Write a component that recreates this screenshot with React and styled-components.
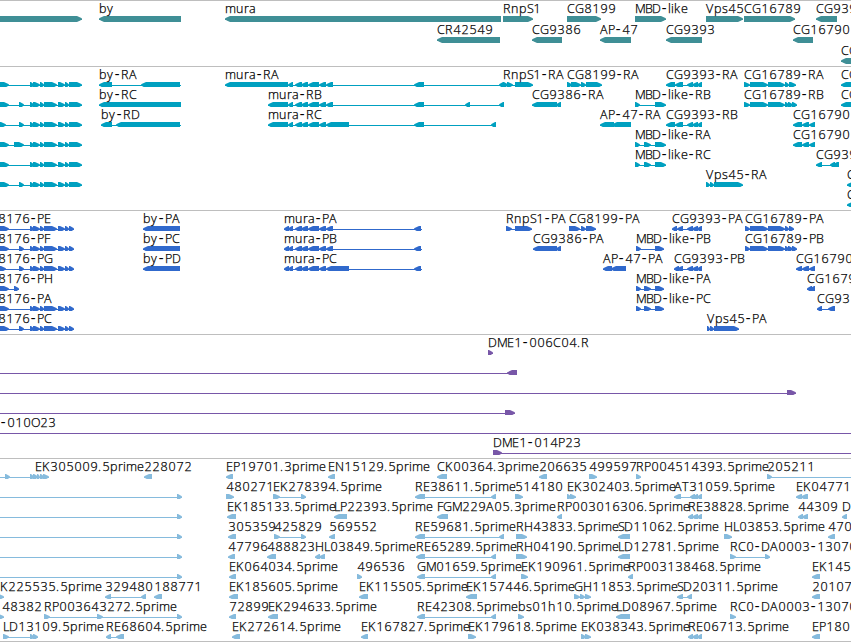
import React from 'react';
import styled, { createGlobalStyle } from 'styled-components';

const palette = {
  gene: '#3f8f96',
  rna: '#00a0c0',
  protein: '#3069cc',
  bac: '#7857a8',
  est: '#86bbdd',
  rule: '#bebebe',
};

const GlobalStyle = createGlobalStyle`
  body {
    background: #fff;
    margin: 0;
    overflow: hidden;
  }
`;

const Browser = styled.main`
  border-bottom: 1px solid ${palette.rule};
  box-sizing: border-box;
  display: flex;
  flex-direction: column;
  height: 642px;
  overflow: hidden;
  width: 851px;
`;

const Track = styled.section`
  border-top: 1px solid ${palette.rule};
  color: ${props => palette[props.$kind]};
  display: flex;
  flex-direction: column;
  padding-bottom: ${props => props.$pad}px;
`;

const LaneCanvas = styled.svg`
  display: block;
  flex: none;
  height: ${props => props.$height}px;
  overflow: hidden;
  width: 851px;
`;

const Label = styled.text`
  fill: #000;
  font-family: 'Open Sans', 'Noto Sans', sans-serif;
  font-size: 12.5px;
  font-weight: 300;
  stroke: #000;
  stroke-width: 0.25px;
`;

const Dash = styled.tspan`
  font-family: 'DejaVu Sans Mono', monospace;
  font-size: 14.5px;
  stroke: none;
`;

const Shape = styled.path`
  fill: currentColor;
`;

// Advance width of each label character, in whole pixels
const advances = {
  A: 8, B: 7, C: 8, D: 9, E: 7, F: 6, G: 9, H: 9, K: 8, L: 6, M: 10, N: 9,
  O: 9, P: 7, R: 8, S: 6, T: 7, V: 8, a: 7, b: 8, e: 7, h: 8, i: 3, k: 7,
  l: 3, m: 11, n: 8, p: 8, r: 5, s: 6, u: 8, y: 7, '-': 7, '.': 4,
};

// Nudges a glyph inside its advance width
const nudge = char => {
  if (char === '-') return -1.2;
  return char >= '0' && char <= '9' ? 0.4 : 0;
};

// Splits a label at its dashes and gives every character its own x
const labelRuns = (text, start) => {
  let x = start;
  return text.split(/(-)/).filter(Boolean).map(run => ({
    run,
    xs: run
      .split('')
      .map(char => {
        const at = x + nudge(char);
        x += advances[char] || 8;
        return at;
      })
      .join(' '),
  }));
};

// Feature: [label, direction, blocks, label x, line end]
const f = (label, dir, blocks, labelX, lineEnd) => ({
  label,
  dir,
  blocks,
  labelX: labelX === undefined ? blocks[0][0] : labelX,
  lineEnd: lineEnd || blocks[blocks.length - 1][1],
});

const R = 'right';
const L = 'left';

// A bar with a slightly rounded arrow head at the end it points to
const blockPath = ([start, end], dir) => {
  const head = Math.min(5, end - start - 1);
  const [back, tip, sign] = dir === R ? [start, end, -1] : [end, start, 1];
  const neck = tip + sign * head;
  const mid = tip + sign * head * 0.45;
  return `M${back} 15H${neck}L${mid} 16.2L${tip} 17.4V18.6L${mid} 19.8L${neck} 21H${back}Z`;
};

const tail = [[30, 34], [33, 40], [40, 44], [44, 57], [58, 65], [65, 69]];
const rnaTail = [...tail, [69, 82]];
const proteinTail = [...tail, [69, 74]];
const muraMid = [[288, 293], [295, 302], [301, 308], [308, 319], [319, 326]];
const mbdLong = [[635, 640], [644, 651], [655, 666]];
const mbdProtein = [[636, 641], [644, 651], [655, 664]];
const cg9393 = [[675, 683], [687, 693], [692, 698], [697, 702]];
const cg9393Protein = [[677, 683], [687, 693], [692, 698], [697, 702]];
const cg16789 = [[750, 768], [768, 785], [785, 789]];
const cg16790 = [[802, 809], [809, 815]];
const longEst = f('', R, [[-20, -15], [177, 182]]);
const re38 = [[688, 693], [692, 698], [697, 702]];

const genes = [
  [
    f('', R, [[-20, 82]]),
    f('by', L, [[99, 181]]),
    f('mura', L, [[225, 501]]),
    f('RnpS1', R, [[503, 533]]),
    f('CG8199', R, [[567, 601]]),
    f('MBD-like', R, [[635, 666]]),
    f('Vps45', R, [[706, 743]]),
    f('CG16789', R, [[744, 795]]),
    f('CG9391', L, [[816, 837]]),
  ],
  [
    f('CR42549', L, [[437, 500]]),
    f('CG9386', L, [[532, 562]]),
    f('AP-47', L, [[600, 631]]),
    f('CG9393', L, [[666, 702]]),
    f('CG16790', L, [[793, 813]]),
  ],
  [f('CG', L, [[841, 870]])],
];

const rnas = [
  [
    f('', R, [[-10, 9], ...rnaTail]),
    f('by-RA', L, [[99, 112], [141, 180]], 99, 181),
    f('mura-RA', L, [[225, 288], ...muraMid, [326, 333], [414, 424], [499, 504]]),
    f('RnpS1-RA', R, [[503, 508], [507, 513], [515, 533]]),
    f('CG8199-RA', R, [[567, 572], [571, 581], [581, 586], [586, 602]]),
    f('CG9393-RA', L, [[666, 675], ...cg9393]),
    f('CG16789-RA', R, [[744, 750], ...cg16789, [789, 796]]),
    f('CG', L, [[841, 870]]),
  ],
  [
    f('', R, [[-10, 9], [19, 24], ...rnaTail]),
    f('by-RC', L, [[99, 181]]),
    f('mura-RB', L, [[268, 288], ...muraMid, [326, 333], [414, 424], [465, 470], [499, 504]]),
    f('CG9386-RA', L, [[532, 557], [556, 561]]),
    f('MBD-like-RB', R, [[635, 640], [655, 666]]),
    f('CG16789-RB', R, [[744, 750], ...cg16789, [788, 793], [792, 797]]),
    f('CG', L, [[841, 870]]),
  ],
  [
    f('', R, [[-10, 6], [19, 24], ...rnaTail]),
    f('by-RD', L, [[101, 112], [116, 180]], 101, 181),
    f('mura-RC', L, [[268, 288], ...muraMid, [326, 349], [414, 424], [491, 496]]),
    f('AP-47-RA', L, [[600, 614], [612, 631]]),
    f('CG9393-RB', L, [[666, 675], ...cg9393]),
    f('CG16790', L, [[793, 802], ...cg16790]),
  ],
  [
    f('', R, [[-10, 9], [14, 24], ...rnaTail]),
    f('MBD-like-RA', R, mbdLong),
    f('CG16790', L, [[793, 802], ...cg16790]),
  ],
  [
    f('', R, [[-10, 9], ...rnaTail]),
    f('MBD-like-RC', R, mbdLong),
    f('CG9391', L, [[816, 822], [830, 835], [833, 838], [836, 839]]),
  ],
  [
    f('', R, [[-10, 9], [19, 24], ...rnaTail]),
    f('Vps45-RA', R, [[706, 710], [710, 714], [714, 743]]),
    f('C', L, [[847, 870]]),
  ],
  [f('C', L, [[847, 870]])],
];

const proteins = [
  [
    f('CG8176-PE', R, [[-10, 9], ...proteinTail], -19),
    f('by-PA', L, [[143, 180]]),
    f('mura-PA', L, [[284, 289], ...muraMid, [326, 333], [414, 421]], 284, 422),
    f('RnpS1-PA', R, [[506, 512], [515, 532]]),
    f('CG8199-PA', R, [[569, 580], [581, 586], [586, 596]]),
    f('CG9393-PA', L, [[672, 677], ...cg9393Protein]),
    f('CG16789-PA', R, [[745, 750], ...cg16789, [789, 794]]),
  ],
  [
    f('CG8176-PF', R, [[-10, 9], [19, 24], ...proteinTail], -19),
    f('by-PC', L, [[143, 180]]),
    f('mura-PB', L, [[284, 289], ...muraMid, [326, 333], [414, 421]], 284, 422),
    f('CG9386-PA', L, [[533, 557], [556, 561]]),
    f('MBD-like-PB', R, [[636, 641], [655, 664]]),
    f('CG16789-PB', R, [[745, 750], ...cg16789, [788, 793], [792, 797]]),
  ],
  [
    f('CG8176-PG', R, [[-10, 6], [19, 24], ...proteinTail], -19),
    f('by-PD', L, [[143, 180]]),
    f('mura-PC', L, [[284, 289], ...muraMid, [326, 349], [414, 421]], 284, 422),
    f('AP-47-PA', L, [[603, 612], [611, 626]]),
    f('CG9393-PB', L, [[674, 679], ...cg9393Protein]),
    f('CG16790', L, [[796, 802], ...cg16790]),
  ],
  [
    f('CG8176-PH', R, [[-10, 9], [14, 19]], -19),
    f('MBD-like-PA', R, mbdProtein),
    f('CG16790', L, [[807, 812], [810, 815]]),
  ],
  [
    f('CG8176-PA', R, [[-10, 9], ...proteinTail], -19),
    f('MBD-like-PC', R, mbdProtein),
    f('CG93', L, [[817, 822], [828, 835]]),
  ],
  [
    f('CG8176-PC', R, [[-10, 9], [19, 24], ...proteinTail], -19),
    f('Vps45-PA', R, [[707, 710], [710, 714], [714, 739]]),
  ],
];

const bacs = [
  [f('DME1-006C04.R', R, [[488, 493]])],
  [f('', L, [[-20, -10], [507, 517]])],
  [f('', R, [[-20, -10], [787, 796]])],
  [f('', R, [[-20, -10], [505, 515]])],
  [f('DME1-010O23', R, [[-50, -40]], -34, 870)],
  [f('DME1-014P23', R, [[493, 502]], 493, 870)],
];

const ests = [
  [
    f('EK305009.5prime', R, [[-20, -15], [5, 10], [30, 34], [33, 38], [37, 40], [40, 44], [43, 49]], 35),
    f('228072', L, [[144, 152]]),
    f('EP19701.3prime', L, [[226, 233]]),
    f('EN15129.5prime', L, [[328, 335]]),
    f('CK00364.3prime', L, [[437, 447]]),
    f('206635', L, [[539, 547]]),
    f('499597', R, [[589, 597]]),
    f('RP004514393.5prime', R, [[636, 641]]),
    f('205211', R, [[767, 772]], 767, 870),
  ],
  [
    longEst,
    f('480271', R, [[226, 234]]),
    f('EK278394.5prime', R, [[273, 280], [301, 306]]),
    f('RE38611.5prime', L, [[415, 425], [491, 496]]),
    f('514180', R, [[515, 523]]),
    f('EK302403.5prime', R, [[567, 571], [570, 576]]),
    f('AT31059.5prime', L, [[674, 681], [690, 695], [693, 698], [697, 702]]),
    f('EK04771', L, [[796, 802], [801, 808]]),
  ],
  [
    longEst,
    f('EK185133.5prime', L, [[227, 236]]),
    f('LP22393.5prime', L, [[334, 347]]),
    f('FGM229A05.3prime', L, [[437, 448]]),
    f('RP003016306.5prime', L, [[557, 562]]),
    f('RE38828.5prime', L, re38),
    f('44309', L, [[798, 803], [802, 808]]),
    f('D', L, [[842, 847]]),
  ],
  [
    longEst,
    f('305359', L, [[228, 236]]),
    f('425829', R, [[274, 280], [301, 306]]),
    f('569552', L, [[329, 335]]),
    f('RE59681.5prime', L, [[415, 425], [499, 504]]),
    f('RH43833.5prime', R, [[516, 527]]),
    f('SD11062.5prime', L, [[618, 630]]),
    f('HL03853.5prime', R, [[724, 732]]),
    f('470', L, [[828, 835]]),
  ],
  [
    longEst,
    f('47796', L, [[228, 235]]),
    f('488823', L, [[267, 276]]),
    f('HL03849.5prime', L, [[315, 320], [319, 325]]),
    f('RE65289.5prime', L, [[416, 425], [491, 496]]),
    f('RH04190.5prime', R, [[516, 527]]),
    f('LD12781.5prime', L, [[618, 630]]),
    f('RC0-DA0003-13070', R, [[730, 736], [765, 770]]),
  ],
  [
    longEst,
    f('EK064034.5prime', L, [[229, 236]]),
    f('496536', R, [[357, 362]]),
    f('GM01659.5prime', L, [[417, 425], [491, 496]]),
    f('EK190961.5prime', R, [[521, 528]]),
    f('RP003138468.5prime', L, [[628, 633]]),
    f('EK145', L, [[812, 820]]),
  ],
  [
    f('EK225535.5prime', R, [[-5, 4]], -7),
    f('329480', L, [[105, 111], [141, 146]]),
    f('188771', L, [[154, 162]]),
    f('EK185605.5prime', L, [[229, 238]]),
    f('EK115505.5prime', L, [[359, 368]]),
    f('EK157446.5prime', L, [[466, 477]]),
    f('GH11853.5prime', R, [[574, 580], [580, 585], [585, 591]]),
    f('SD20311.5prime', L, [[677, 683], [687, 692]]),
    f('20107', L, [[812, 820]]),
  ],
  [
    f('48382', R, [[-4, 4]], 2),
    f('RP003643272.5prime', R, [[44, 50], [97, 103], [177, 182]]),
    f('72899', L, [[229, 236]]),
    f('EK294633.5prime', L, [[268, 278]]),
    f('RE42308.5prime', L, [[417, 425], [491, 496]]),
    f('bs01h10.5prime', R, [[518, 524]]),
    f('LD08967.5prime', L, [[616, 630]]),
    f('RC0-DA0003-13070', R, [[730, 736]]),
  ],
  [
    f('LD13109.5prime', R, [[3, 9], [30, 34], [33, 38]]),
    f('RE68604.5prime', L, [[106, 111], [116, 124]]),
    f('EK272614.5prime', L, [[232, 240]]),
    f('EK167827.5prime', L, [[361, 368]]),
    f('EK179618.5prime', R, [[468, 476]]),
    f('EK038343.5prime', R, [[581, 586], [585, 591]]),
    f('RE06713.5prime', L, re38),
    f('EP180', L, [[812, 820]]),
  ],
];

const tracks = [
  { kind: 'gene', lanes: genes, laneHeight: 21, pad: 2 },
  { kind: 'rna', lanes: rnas, laneHeight: 20, pad: 3 },
  { kind: 'protein', lanes: proteins, laneHeight: 20, pad: 3 },
  { kind: 'bac', lanes: bacs, laneHeight: 20, pad: 3 },
  { kind: 'est', lanes: ests, laneHeight: 20, pad: 2 },
];

const Feature = ({ feature: { label, dir, blocks, labelX, lineEnd } }) => (
  <g>
    <Shape d={`M${blocks[0][0]} 18H${lineEnd}V19H${blocks[0][0]}Z`} />
    {blocks.map(block => <Shape key={block[0]} d={blockPath(block, dir)} />)}
    {!!label &&
      <Label y="12">
        {labelRuns(label, labelX).map(({ run, xs }) => (
          run === '-'
            ? <Dash key={xs} x={xs}>{run}</Dash>
            : <tspan key={xs} x={xs}>{run}</tspan>
        ))}
      </Label>}
  </g>
);

const Lane = ({ features, height }) => (
  <LaneCanvas $height={height}>
    {features.map((feature, i) => <Feature key={i} feature={feature} />)}
  </LaneCanvas>
);

const App = () => (
  <Browser>
    <GlobalStyle />
    {tracks.map(({ kind, lanes, laneHeight, pad }) => (
      <Track key={kind} $kind={kind} $pad={pad}>
        {lanes.map((features, i) => (
          <Lane key={i} features={features} height={laneHeight} />
        ))}
      </Track>
    ))}
  </Browser>
);

export default App;
